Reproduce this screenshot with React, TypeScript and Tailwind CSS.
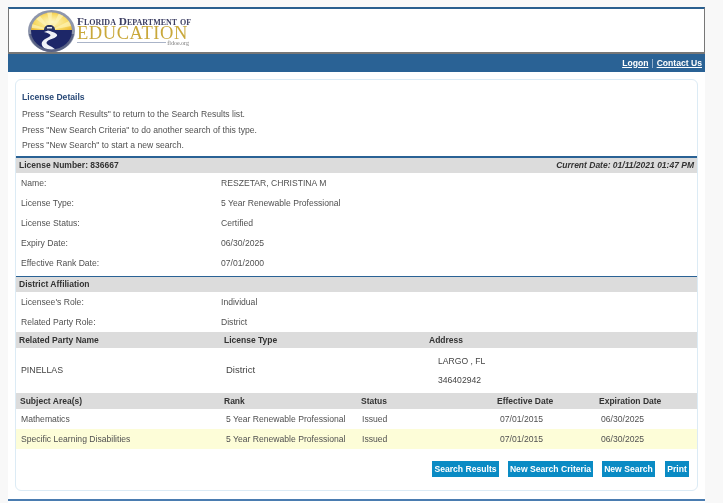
import React from "react";

const Logo = () => (
  <svg width="47" height="42" viewBox="0 0 47 42" className="shrink-0">
    <defs>
      <clipPath id="disc">
        <ellipse cx="23.5" cy="21" rx="20.5" ry="18.5" />
      </clipPath>
      <radialGradient id="sky" cx="50%" cy="55%" r="60%">
        <stop offset="0%" stopColor="#fdf6c8" />
        <stop offset="55%" stopColor="#f8dc6a" />
        <stop offset="100%" stopColor="#e8ac1c" />
      </radialGradient>
    </defs>
    <ellipse cx="23.5" cy="21" rx="23.5" ry="21" fill="#8e96ac" />
    <path d="M1 24 C3 34 12 42 23.5 42 C35 42 44 34 46 24 Z" fill="#5a6384" />
    <g clipPath="url(#disc)">
      <rect x="0" y="0" width="47" height="22" fill="url(#sky)" />
      <path d="M23 20 L8 9 L12 6 Z M23 20 L19 2 L24 2 Z M23 20 L31 3 L36 5 Z M23 20 L41 11 L43 16 Z M23 20 L4 14 L4 18 Z" fill="#fdf3b8" opacity="0.7" />
      <rect x="0" y="20" width="47" height="22" fill="#1d2768" />
      <path d="M20 20.5 C30 23 32 26 25 28.5 C17 31 16 34 24 37 L31 42 L22 42 C12 37 11 32 19 28 C24 26 24 24 16 22 Z" fill="#eef1f7" />
      <path d="M16 20 C16 17 18 15 21.500 15 C25 15 27 17 27 20 Z" fill="#2b3560" />
      <rect x="19" y="17" width="5" height="1.500" fill="#dfe3ee" />
    </g>
  </svg>
);

const InfoRow = ({ label, value }: { label: string; value: string }) => (
  <div className="flex h-5 items-center pl-[5px]">
    <div className="w-[200px]">{label}</div>
    <div>{value}</div>
  </div>
);

const Bar = ({
  children,
  height = "h-4",
}: {
  children: React.ReactNode;
  height?: string;
}) => (
  <div className={`flex ${height} items-center bg-[#dcdcdc] text-[8.5px] font-bold text-[#333333]`}>
    {children}
  </div>
);

const subjects = [
  { name: "Mathematics", highlight: false },
  { name: "Specific Learning Disabilities", highlight: true },
];

const buttons = [
  { label: "Search Results", className: "w-[67px]" },
  { label: "New Search Criteria", className: "w-[85px]" },
  { label: "New Search", className: "w-[53px]" },
  { label: "Print", className: "ml-px w-[24px]" },
];

const App = () => {
  return (
    <main className="h-[503px] w-[723px] overflow-hidden bg-[#f8f8f8] pl-2 pt-[7px] font-['Liberation_Sans',Arial,sans-serif] text-[8.6px] text-[#505050] blur-[0.35px]">
      <div className="h-[496px] w-[697px] bg-white">
        <div className="flex h-[47px] items-center border-x border-b-2 border-t-2 border-x-[#777777] border-b-[#777777] border-t-[#2a5f8f] bg-white pl-[19px]">
          <Logo />
          <div className="ml-[2px] flex w-[112px] flex-col font-['Liberation_Serif',serif]">
            <div className="h-[10px] text-[11.3px] leading-[10px] font-bold whitespace-nowrap text-[#3d3f63] [font-variant:small-caps]">
              Florida Department of
            </div>
            <div className="h-[14px] text-[18.5px] leading-[14px] tracking-[0.55px] whitespace-nowrap text-[#c9a83a]">
              EDUCATION
            </div>
            <div className="flex h-[6px] items-center gap-px text-[6px] leading-[6px] text-[#777777]">
              <div className="h-px flex-1 bg-[#aab4c8]" />
              fldoe.org
            </div>
          </div>
        </div>
        <div className="flex h-[18px] items-center justify-end bg-[#2a6295] pr-[3px] font-bold text-white">
          <a className="underline">Logon</a>
          <span className="mx-[3px] font-normal text-[#b8cbe0]">|</span>
          <a className="underline">Contact Us</a>
        </div>

        <div className="ml-[7px] mt-[7px] h-[412px] w-[683px] rounded-md border border-[#dcebf5] bg-white">
          <div className="px-[6px] pt-[9px]">
            <div className="h-4 font-bold leading-4 text-[#2a4a78]">License Details</div>
            <div className="mt-px h-4 leading-4">Press "Search Results" to return to the Search Results list.</div>
            <div className="h-4 leading-4">Press "New Search Criteria" to do another search of this type.</div>
            <div className="h-[15px] leading-[15px]">Press "New Search" to start a new search.</div>
          </div>

          <div className="mt-[3px] border-t-2 border-[#2a6295]">
            <div className="flex h-[15px] items-center justify-between bg-[#dcdcdc] px-[3px] text-[8.5px] font-bold text-[#333333]">
              <span>License Number: 836667</span>
              <span className="italic">Current Date: 01/11/2021 01:47 PM</span>
            </div>
            <InfoRow label="Name:" value="RESZETAR, CHRISTINA M" />
            <InfoRow label="License Type:" value="5 Year Renewable Professional" />
            <InfoRow label="License Status:" value="Certified" />
            <InfoRow label="Expiry Date:" value="06/30/2025" />
            <InfoRow label="Effective Rank Date:" value="07/01/2000" />
          </div>

          <div className="mt-[3px] border-t border-[#2a6295]">
            <Bar height="h-[15px]">
              <span className="pl-[3px]">District Affiliation</span>
            </Bar>
            <InfoRow label="Licensee's Role:" value="Individual" />
            <InfoRow label="Related Party Role:" value="District" />
            <Bar>
              <div className="w-[208px] pl-[3px]">Related Party Name</div>
              <div className="w-[205px]">License Type</div>
              <div>Address</div>
            </Bar>
            <div className="flex h-[45px] items-center text-[#444444]">
              <div className="w-[210px] pl-[5px] text-[8.8px]">PINELLAS</div>
              <div className="w-[212px] text-[9.5px]">District</div>
              <div className="flex flex-col gap-[6px]">
                <div>LARGO , FL</div>
                <div>346402942</div>
              </div>
            </div>
            <Bar>
              <div className="w-[208px] pl-[4px]">Subject Area(s)</div>
              <div className="w-[137px]">Rank</div>
              <div className="w-[136px]">Status</div>
              <div className="w-[102px]">Effective Date</div>
              <div>Expiration Date</div>
            </Bar>
            {subjects.map((subject) => (
              <div
                key={subject.name}
                className={`flex h-5 items-center ${subject.highlight ? "bg-[#fdfdd8]" : "bg-white"}`}
              >
                <div className="w-[210px] pl-[5px]">{subject.name}</div>
                <div className="w-[136px]">5 Year Renewable Professional</div>
                <div className="w-[138px]">Issued</div>
                <div className="w-[101px]">07/01/2015</div>
                <div>06/30/2025</div>
              </div>
            ))}
          </div>

          <div className="mt-3 flex justify-end gap-[9px] pr-2">
            {buttons.map((button) => (
              <button
                key={button.label}
                className={`flex h-4 ${button.className} items-center justify-center whitespace-nowrap bg-[#0a8bc4] font-bold text-white`}
              >
                {button.label}
              </button>
            ))}
          </div>
        </div>
        <div className="mt-2 h-0.5 bg-[#4a7cb0]" />
      </div>
    </main>
  );
};

export default App;
